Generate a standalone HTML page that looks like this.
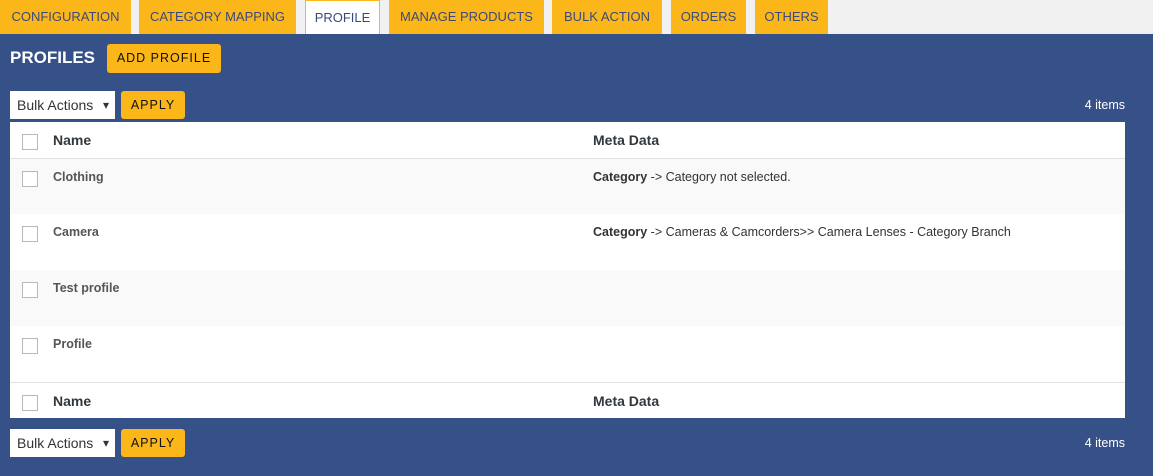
<!DOCTYPE html><html><head><style>
*{box-sizing:border-box;margin:0;padding:0}
body{width:1153px;height:476px;background:#365088;font-family:"Liberation Sans",sans-serif;position:relative;overflow:hidden}
.top{position:absolute;left:0;top:0;width:1153px;height:34px;background:#f1f1f1}
.tab{position:absolute;top:0;height:34px;background:#fbb61a;color:#3c4a7a;font-size:13px;line-height:34px;text-align:center}
.tab.a{background:#fff;border:1px solid #fbb61a;border-bottom:none}
.ab{position:absolute;color:#fff;font-weight:bold}
.btn{position:absolute;background:#fbb61a;color:#111;font-size:12.5px;letter-spacing:1px;text-align:center;border-radius:3px}
.sel{position:absolute;background:#fff;font-size:14px;color:#333;padding-left:7px;line-height:28px}
.sel:after{content:"▾";position:absolute;right:6px;font-size:12px}
.items{position:absolute;color:#fff;font-size:12.5px;right:28px}
table{position:absolute;left:10px;top:122px;width:1115px;border-collapse:collapse;background:#fff;font-size:12.5px;color:#333}
td{vertical-align:top;padding:0}
.cb{display:inline-block;width:16px;height:16px;border:1px solid #b4b9be;background:#fff;margin:12px 0 0 12px}
.h td{height:36px;font-weight:bold;font-size:14px;color:#32373c}
.h td.n,.h td.m{padding-top:10px}
tr.r td{height:56px}
tr.r td.n,tr.r td.m{padding-top:11px}
tr.r td.n{font-weight:bold;color:#555}
tr.odd{background:#f9f9f9}
td.c{width:43px}td.n{width:540px}
.bt{border-top:1px solid #e1e1e1}
</style></head><body>
<div class="top"></div>
<div class="tab" style="left:0;width:131px">CONFIGURATION</div>
<div class="tab" style="left:139px;width:157px">CATEGORY MAPPING</div>
<div class="tab a" style="left:305px;width:75px;color:#3c4a7a">PROFILE</div>
<div class="tab" style="left:389px;width:155px">MANAGE PRODUCTS</div>
<div class="tab" style="left:552px;width:110px">BULK ACTION</div>
<div class="tab" style="left:671px;width:75px">ORDERS</div>
<div class="tab" style="left:755px;width:73px">OTHERS</div>
<div class="ab" style="left:10px;top:48px;font-size:17px">PROFILES</div>
<div class="btn" style="left:107px;top:44px;width:114px;height:29px;line-height:29px">ADD PROFILE</div>
<div class="sel" style="left:10px;top:91px;width:105px;height:28px">Bulk Actions</div>
<div class="btn" style="left:121px;top:91px;width:64px;height:28px;line-height:28px">APPLY</div>
<div class="items" style="top:98px">4 items</div>
<table>
<tr class="h"><td class="c"><span class="cb"></span></td><td class="n">Name</td><td class="m">Meta Data</td></tr>
<tr class="r odd bt"><td class="c"><span class="cb"></span></td><td class="n">Clothing</td><td class="m"><b>Category</b> -&gt; Category not selected.</td></tr>
<tr class="r"><td class="c"><span class="cb"></span></td><td class="n">Camera</td><td class="m"><b>Category</b> -&gt; Cameras &amp; Camcorders&gt;&gt; Camera Lenses - Category Branch</td></tr>
<tr class="r odd"><td class="c"><span class="cb"></span></td><td class="n">Test profile</td><td class="m"></td></tr>
<tr class="r"><td class="c"><span class="cb"></span></td><td class="n">Profile</td><td class="m"></td></tr>
<tr class="h bt"><td class="c"><span class="cb"></span></td><td class="n">Name</td><td class="m">Meta Data</td></tr>
</table>
<div class="sel" style="left:10px;top:429px;width:105px;height:28px">Bulk Actions</div>
<div class="btn" style="left:121px;top:429px;width:64px;height:28px;line-height:28px">APPLY</div>
<div class="items" style="top:436px">4 items</div>
</body></html>
